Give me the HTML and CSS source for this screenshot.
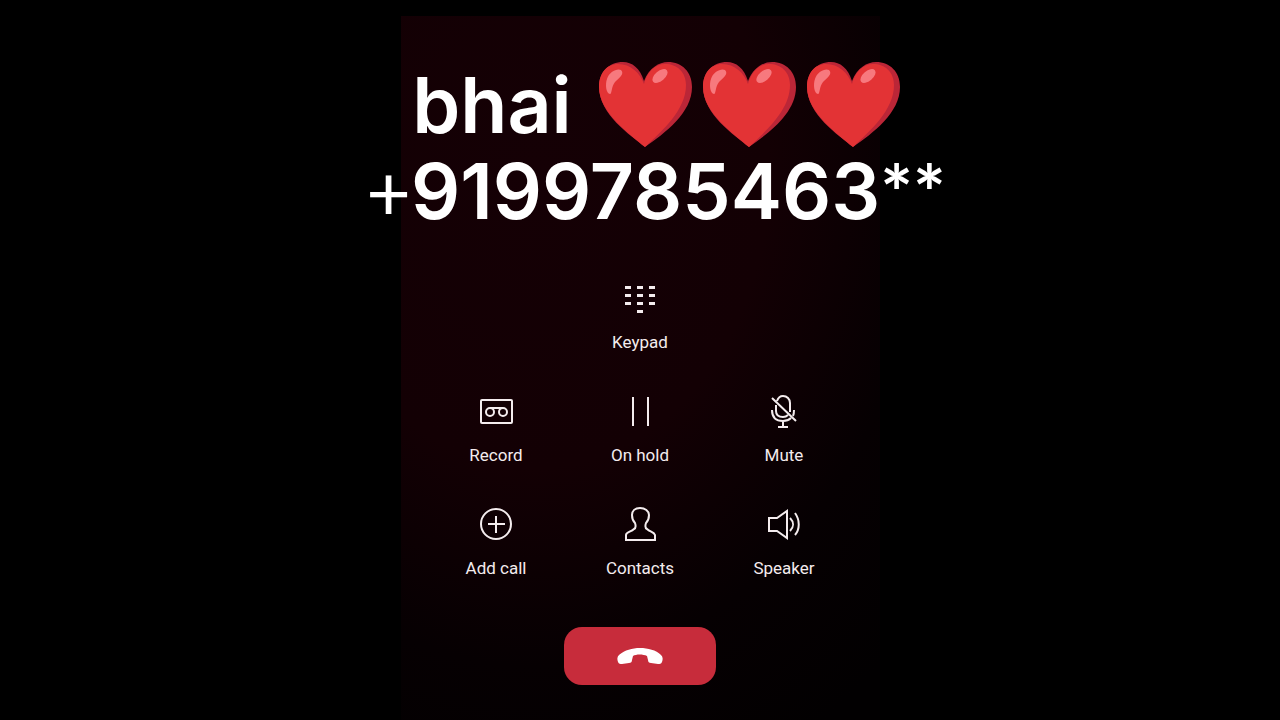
FILE: index.html
```html
<!DOCTYPE html>
<html lang="en">
<head>
<meta charset="utf-8">
<meta name="viewport" content="width=device-width, initial-scale=1">
<title>Call</title>
<link rel="stylesheet" href="styles.css">
</head>
<body>
<svg class="defs" aria-hidden="true">
  <symbol id="heart" viewBox="0 0 93 86">
    <path fill="#bb2637" d="M46 85C31 73 0 52 0 25 0 10 10 0 24 0c9 0 17 6 21 19C50 6 60 0 69 0c14 0 24 10 24 25 0 26-27 46-47 60z"/>
    <path fill="#e33335" d="M46 85C32 73 0 51 0 25 0 11 8 2 19 2c13 0 22 9 26 20C48 10 56 2 66 2c12 0 21 8 21 21 0 25-24 46-41 62z"/>
    <path fill="#f7797e" d="M22 8c4 4-2 8-6 12-4 5-3 12-5 12-4 0-5-10-3-15C10 10 18 6 22 8z"/>
    <ellipse cx="61" cy="14" rx="9" ry="5" transform="rotate(-40 61 14)" fill="#f7797e"/>
  </symbol>
</svg>
<main class="phone">
  <header class="caller">
    <h1 class="name">bhai
      <span class="hearts" role="img" aria-label="three red hearts">
        <svg class="heart"><use href="#heart"/></svg>
        <svg class="heart"><use href="#heart"/></svg>
        <svg class="heart"><use href="#heart"/></svg>
      </span>
    </h1>
    <p class="number"><span class="sign">+</span>9199785463<span class="sign stars">**</span></p>
  </header>
  <div class="actions">
    <button class="action keypad" type="button">
      <svg class="icon solid" viewBox="0 0 36 36"><path d="M3 6h6v3H3zM15 6h6v3h-6zM27 6h6v3h-6zM3 14h6v3H3zM15 14h6v3h-6zM27 14h6v3h-6zM3 22h6v3H3zM15 22h6v3h-6zM27 22h6v3h-6zM15 30h6v3h-6z"/></svg>
      <span>Keypad</span>
    </button>
    <button class="action" type="button">
      <svg class="icon" viewBox="0 0 36 36"><rect x="3" y="7" width="31" height="23" rx="1"/><circle cx="12" cy="19" r="4"/><circle cx="25" cy="19" r="4"/><path d="M12 15h13"/></svg>
      <span>Record</span>
    </button>
    <button class="action" type="button">
      <svg class="icon" viewBox="0 0 36 36"><path d="M11 4v29M26 4v29"/></svg>
      <span>On hold</span>
    </button>
    <button class="action" type="button">
      <svg class="icon" viewBox="0 0 36 36"><path d="M11 8c1-3 3-5 6-5 4 0 7 3 7 7v9M10 12v6c0 4 3 6 7 6 2 0 4-1 5-2M6 17c0 7 4 11 11 11 3 0 6-1 8-3M28 17c0 3 0 4-1 6M17 28v6M12 34h10M6 5l24 23"/></svg>
      <span>Mute</span>
    </button>
    <button class="action" type="button">
      <svg class="icon" viewBox="0 0 36 36"><circle cx="18" cy="18" r="15"/><path d="M18 10v17M10 18h17"/></svg>
      <span>Add call</span>
    </button>
    <button class="action" type="button">
      <svg class="icon" viewBox="0 0 36 36"><path d="M18 2c-5 0-8 3-8 7 0 4 1 6 3 8 1 3 1 5-1 6-3 3-8 3-8 6v5h29v-5c-1-3-5-3-8-6-2-1-2-3-1-6 2-2 3-4 3-8 0-4-4-7-9-7z"/></svg>
      <span>Contacts</span>
    </button>
    <button class="action" type="button">
      <svg class="icon" viewBox="0 0 36 36"><path d="M3 12h8l10-7v27l-10-7H3zM24 12c4 4 4 9 0 13M29 7c5 7 5 16 0 22"/></svg>
      <span>Speaker</span>
    </button>
  </div>
  <button class="end" type="button" aria-label="End call">
    <svg class="handset" viewBox="0 0 46 16"><path d="M2 7C8 2 15 0 23 0s16 2 21 7c2 2 2 4 1 7-1 2-2 2-4 2l-7-1c-2 0-3-1-3-3l-1-4c-4-2-11-2-14 0l-1 4c0 2-1 3-3 3l-7 1c-2 0-3 0-4-2-1-3-1-5 1-7z"/></svg>
  </button>
</main>
</body>
</html>
```
FILE: styles.css
```css
* { box-sizing: border-box; }

body {
  margin: 0;
  min-height: 100vh;
  padding-top: 16px;
  display: flex;
  justify-content: center;
  background: #000;
  color: #fff;
  overflow-x: hidden;
}

.defs {
  position: absolute;
  width: 0;
  height: 0;
}

.phone {
  width: 100%;
  max-width: 479px;
  padding: 46px 24px 32px;
  display: flex;
  flex-direction: column;
  align-items: center;
  background: radial-gradient(ellipse 520px 660px at 28% 22%, #150005 0%, #130004 45%, #060002 75%, #020001 100%);
}

.caller {
  padding-left: 32px;
  font-family: Inter, "Liberation Sans", sans-serif;
  font-size: 77px;
  line-height: 86px;
  font-weight: 600;
  white-space: nowrap;
}

.name,
.number {
  margin: 0;
  font: inherit;
  display: flex;
  justify-content: center;
}

.name { gap: 27px; }

.sign {
  font-family: Lato, "Liberation Sans", sans-serif;
  font-weight: 400;
}

.stars { font-weight: 700; }

.hearts {
  display: flex;
  gap: 11px;
}

.heart {
  width: 93px;
  height: 86px;
}

.actions {
  margin-top: 46px;
  display: grid;
  grid-template-columns: repeat(3, 144px);
  row-gap: 39px;
}

.keypad { grid-column: 1 / -1; }

.action {
  border: 0;
  padding: 0;
  background: none;
  color: #f4ecee;
  display: flex;
  flex-direction: column;
  align-items: center;
  gap: 14px;
  font: 17px/24px Roboto, sans-serif;
  cursor: pointer;
}

.icon {
  width: 36px;
  height: 36px;
  fill: none;
  stroke: currentColor;
  stroke-width: 2;
}

.solid {
  fill: currentColor;
  stroke: none;
}

.end {
  margin-top: 47px;
  width: 152px;
  height: 58px;
  border: 0;
  border-radius: 18px;
  background: #c72c3b;
  display: flex;
  align-items: center;
  justify-content: center;
  cursor: pointer;
}

.handset {
  width: 46px;
  height: 16px;
  fill: #fff;
}
```
